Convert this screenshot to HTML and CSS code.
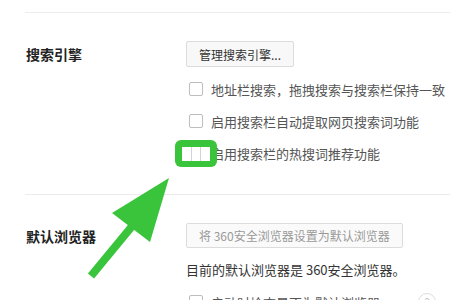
FILE: index.html
```html
<!DOCTYPE html>
<html>
<head>
    <title>设置</title>
    <link rel="stylesheet" href="styles.css">
</head>
<body>
    <div class="page">
        <div class="divider"></div>

        <div class="section">
            <div class="section-label">搜索引擎</div>
            <div class="section-body">
                <button class="btn">管理搜索引擎...</button>
                <ul class="options">
                    <li class="option"><span class="checkbox"></span>地址栏搜索，拖拽搜索与搜索栏保持一致</li>
                    <li class="option"><span class="checkbox"></span>启用搜索栏自动提取网页搜索词功能</li>
                    <li class="option option-marked">
                        <span class="checkbox"></span>启用搜索栏的热搜词推荐功能
                        <span class="highlight"><span class="highlight-inner"><i></i><i></i><i></i></span></span>
                    </li>
                </ul>
            </div>
        </div>

        <div class="divider"></div>

        <div class="section">
            <div class="section-label">默认浏览器</div>
            <div class="section-body">
                <button class="btn btn-disabled">将 360安全浏览器设置为默认浏览器</button>
                <p class="note">目前的默认浏览器是 360安全浏览器。</p>
                <ul class="options">
                    <li class="option"><span class="checkbox"></span>启动时检查是否为默认浏览器<span class="help">?</span></li>
                </ul>
            </div>
        </div>

        <svg class="arrow" width="450" height="300" viewBox="0 0 450 300">
            <line x1="91" y1="276" x2="138" y2="219" stroke="#3ac43b" stroke-width="8" />
            <polygon points="169,178 112,213 150,242" fill="#3ac43b" />
        </svg>
    </div>
</body>
</html>
```

FILE: styles.css
```css
* {
    box-sizing: border-box;
}

body {
    margin: 0;
    padding: 0;
    background-color: #fff;
    font-family: "Noto Sans CJK SC", "Noto Sans", sans-serif;
    color: #333;
    overflow: hidden;
}

.page {
    position: relative;
    width: 450px;
    height: 300px;
    overflow: hidden;
    padding-top: 12px;
    padding-left: 25px;
}

.divider {
    border-top: 1px solid #ececec;
}

.section {
    display: flex;
    padding-top: 28px;
    padding-bottom: 30px;
}

.section-label {
    flex-shrink: 0;
    width: 161px;
    padding-left: 1px;
    font-size: 14px;
    font-weight: bold;
    line-height: 26px;
    color: #222;
}

.section-body {
    display: flex;
    flex-direction: column;
    align-items: flex-start;
}

.btn {
    height: 26px;
    padding: 0 12px;
    border: 1px solid #dcdcdc;
    border-radius: 2px;
    background-color: #f8f8f8;
    font-family: inherit;
    font-size: 12px;
    color: #333;
}

.btn-disabled {
    height: 25px;
    color: #999;
    background-color: #fafafa;
}

.options {
    list-style: none;
    margin: 11px 0 0;
    padding: 0;
    display: flex;
    flex-direction: column;
    gap: 10px;
}

.option {
    position: relative;
    display: flex;
    align-items: center;
    height: 22px;
    font-size: 13px;
    color: #555;
    white-space: nowrap;
}

.checkbox {
    flex-shrink: 0;
    width: 14px;
    height: 14px;
    margin-left: 3px;
    margin-right: 8px;
    border: 1px solid #bdbdbd;
    border-radius: 2px;
    background-color: #fff;
}

.highlight {
    position: absolute;
    left: -11px;
    top: -2px;
    width: 42px;
    height: 27px;
    border-radius: 6px;
    background-color: #3ac43b;
    display: flex;
    align-items: center;
    justify-content: center;
}

.highlight-inner {
    display: flex;
    width: 28px;
    height: 14px;
    background-color: #fff;
}

.highlight-inner i {
    flex: 1;
    border-right: 1px solid #d4d4d4;
}

.highlight-inner i:last-child {
    border-right: none;
}

.note {
    margin: 12px 0 0;
    font-size: 13px;
    line-height: 20px;
    color: #333;
    white-space: nowrap;
}

.section .note + .options {
    margin-top: 11px;
}

.help {
    flex-shrink: 0;
    margin-left: 38px;
    width: 18px;
    height: 18px;
    border: 1px solid #ddd;
    border-radius: 50%;
    font-size: 11px;
    color: #bbb;
    text-align: center;
    line-height: 16px;
}

.arrow {
    position: absolute;
    top: 0;
    left: 0;
    pointer-events: none;
}
```
